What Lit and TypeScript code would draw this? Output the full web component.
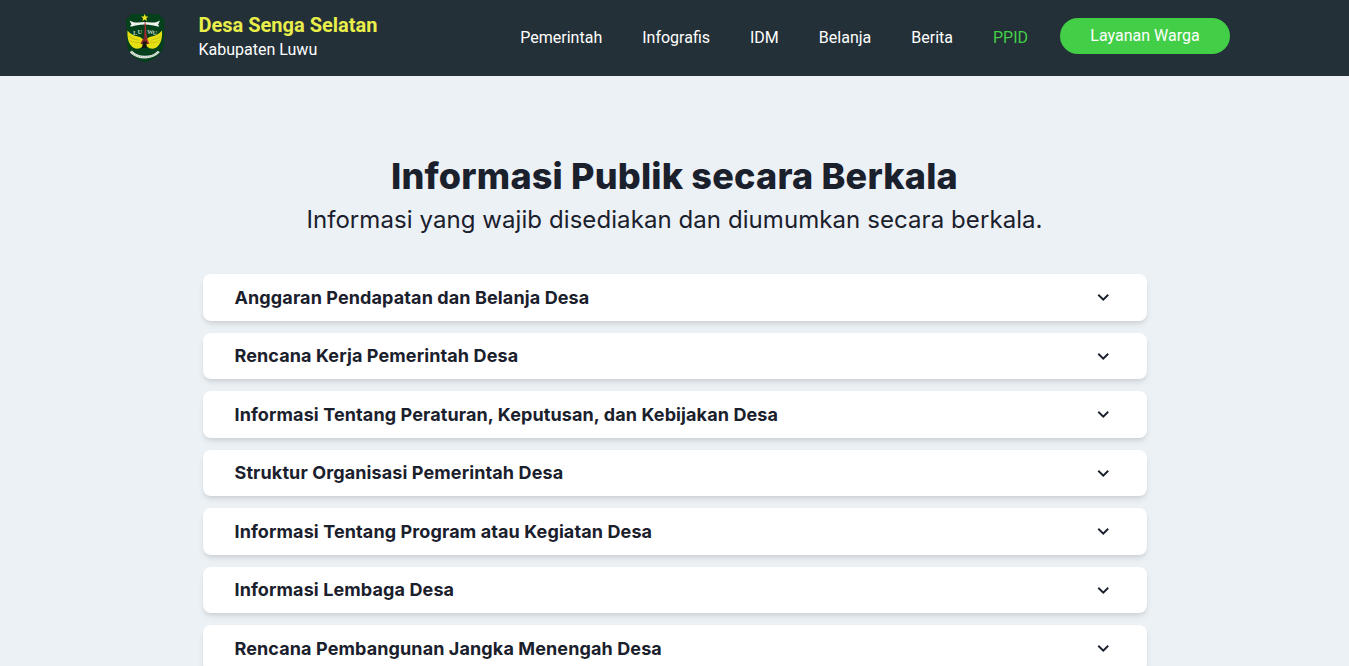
import { LitElement, html, css, svg } from "lit";
import { customElement, property } from "lit/decorators.js";

@customElement("village-emblem")
class VillageEmblem extends LitElement {
  static styles = css`
    :host { display: block; width: 60px; height: 65px; }
    svg { display: block; }
    .letter { font: 700 6.5px "Liberation Serif", serif; fill: #b9cdbd; }
  `;

  wing() {
    return svg`
      <path d="M12.500 25.500 C12 33 13.500 40 19 43 C24 45 29.500 42 29 37 C28 33 25.500 32 23 31.500 C19 30.500 15 29 12.500 25.500Z" fill="#e6df12"/>
      <path d="M14 31 C17 34.500 21 34 24 35.500 M14.500 35 C18 38 21 37 25 38" fill="none" stroke="#b3b018" stroke-width=".6"/>`;
  }

  render() {
    return html`
      <svg width="60" height="65" viewBox="0 0 60 65" role="img" aria-label="Luwu">
        <path d="M16 9 L44 9 C45 11 47 13 49.500 14 L49 38 C48 50 39 54 30 57.500 C21 54 13 50 12 38 L11 14 C14 13 15 11 16 9Z" fill="#04401b"/>
        <path d="M14.500 15.500 C20 18.500 24 17.500 29.500 17 C35 17.500 40 18.500 45 15.500 L43 20 C45 21 44 22 42.500 21.500 C39 20.500 35 19.500 29.500 19.500 C24 19.500 20 20.500 17 21.500 C15 22 14.500 20.500 16.500 19.500Z" fill="#eff3f0"/>
        ${this.wing()}
        <g transform="translate(59.500 0) scale(-1 1)">${this.wing()}</g>
        <text class="letter" x="18" y="30">L</text>
        <text class="letter" x="22.500" y="28.500">U</text>
        <text class="letter" x="32" y="28.500">W</text>
        <text class="letter" x="37.500" y="30">U</text>
        <path d="M30 17 L28.600 34 L25.500 39 L34 39 L31.400 34Z" fill="#7d2529"/>
        <path d="M30 17 L31.200 32 L33.800 38.500 M25.800 38 L28.500 34" fill="none" stroke="#c12c32" stroke-width=".9"/>
        <path d="M28 36.500 L31.500 36.500 L31.500 43 L27 43Z" fill="#17170f"/>
        <path d="M29.700 8.800 L30.700 11.500 L33.400 11.600 L31.300 13.300 L32 16 L29.700 14.500 L27.400 16 L28.100 13.300 L26 11.600 L28.700 11.500Z" fill="#efe420"/>
        <path d="M15.800 46.500 C23 54 37 54 43.800 46.500" fill="none" stroke="#dfe6df" stroke-width="2.600"/>
        <path d="M15.800 46.500 C23 54 37 54 43.800 46.500" fill="none" stroke="#9fb4a5" stroke-width="1.400" stroke-dasharray=".7 1.100"/>
      </svg>`;
  }
}

@customElement("accordion-row")
class AccordionRow extends LitElement {
  @property() label = "";

  static styles = css`
    :host { display: block; }
    .row {
      box-sizing: border-box;
      display: flex;
      align-items: center;
      justify-content: space-between;
      width: 100%;
      height: 46.5px;
      padding: 12px 32px;
      border: 0;
      border-radius: 8px;
      background: #fff;
      color: #1a202c;
      font: 700 18px/1.2 Inter, sans-serif;
      text-align: left;
      box-shadow: 0 4px 6px -1px rgba(0, 0, 0, 0.1), 0 2px 4px -1px rgba(0, 0, 0, 0.06);
    }
    .label { padding-top: 1px; letter-spacing: 0.108px; }
    .chevron { display: block; width: 1.25em; height: 1.25em; fill: currentColor; }
  `;

  render() {
    return html`
      <button class="row" aria-expanded="false">
        <span class="label">${this.label}</span>
        <svg class="chevron" viewBox="0 0 24 24" aria-hidden="true">
          <path d="M16.59 8.59L12 13.17 7.41 8.59 6 10l6 6 6-6z"/>
        </svg>
      </button>`;
  }
}

@customElement("app-root")
class AppRoot extends LitElement {
  static styles = css`
    :host {
      display: block;
      height: 100vh;
      overflow: hidden;
      background: #ecf1f6;
      color: #1a202c;
      font-family: Inter, sans-serif;
    }
    .header {
      box-sizing: border-box;
      display: flex;
      justify-content: space-between;
      height: 76px;
      padding: 0 119px 0 115px;
      background: #233038;
      color: #fff;
      font: 400 16px/24px Roboto, sans-serif;
    }
    .brand { display: flex; gap: 23.500px; padding-top: 5px; }
    .names { padding-top: 8px; }
    .village { color: #e9ee4a; font-size: 20px; font-weight: 700; line-height: 24px; }
    .regency { padding-top: 1px; }
    .nav { display: flex; align-items: flex-start; gap: 40px; padding-top: 18px; }
    .link { padding-top: 8px; color: #fff; text-decoration: none; }
    .link.active { color: #43ce47; }
    .service {
      width: 170px;
      height: 36px;
      margin-left: -8px;
      padding: 0;
      border: 0;
      border-radius: 18px;
      background: #43ce47;
      color: #fff;
      font: 400 16px/36px Roboto, sans-serif;
    }
    .title { margin: 79px 0 0; text-align: center; font-size: 36px; font-weight: 800; line-height: 43px; letter-spacing: 0.2px; }
    .subtitle { margin: 4px 0 0; text-align: center; font-size: 24px; line-height: 36px; letter-spacing: 0.075px; }
    .list { display: flex; flex-direction: column; gap: 12px; width: 944px; margin: 36px auto 0; }
  `;

  links = ["Pemerintah", "Infografis", "IDM", "Belanja", "Berita", "PPID"];
  topics = [
    "Anggaran Pendapatan dan Belanja Desa",
    "Rencana Kerja Pemerintah Desa",
    "Informasi Tentang Peraturan, Keputusan, dan Kebijakan Desa",
    "Struktur Organisasi Pemerintah Desa",
    "Informasi Tentang Program atau Kegiatan Desa",
    "Informasi Lembaga Desa",
    "Rencana Pembangunan Jangka Menengah Desa",
  ];

  render() {
    return html`
      <header class="header">
        <div class="brand">
          <village-emblem></village-emblem>
          <div class="names">
            <div class="village">Desa Senga Selatan</div>
            <div class="regency">Kabupaten Luwu</div>
          </div>
        </div>
        <nav class="nav">
          ${this.links.map((l) => html`<a class="link ${l === "PPID" ? "active" : ""}" href="#">${l}</a>`)}
          <button class="service">Layanan Warga</button>
        </nav>
      </header>
      <main>
        <h1 class="title">Informasi Publik secara Berkala</h1>
        <p class="subtitle">Informasi yang wajib disediakan dan diumumkan secara berkala.</p>
        <section class="list">
          ${this.topics.map((t) => html`<accordion-row .label=${t}></accordion-row>`)}
        </section>
      </main>`;
  }
}
